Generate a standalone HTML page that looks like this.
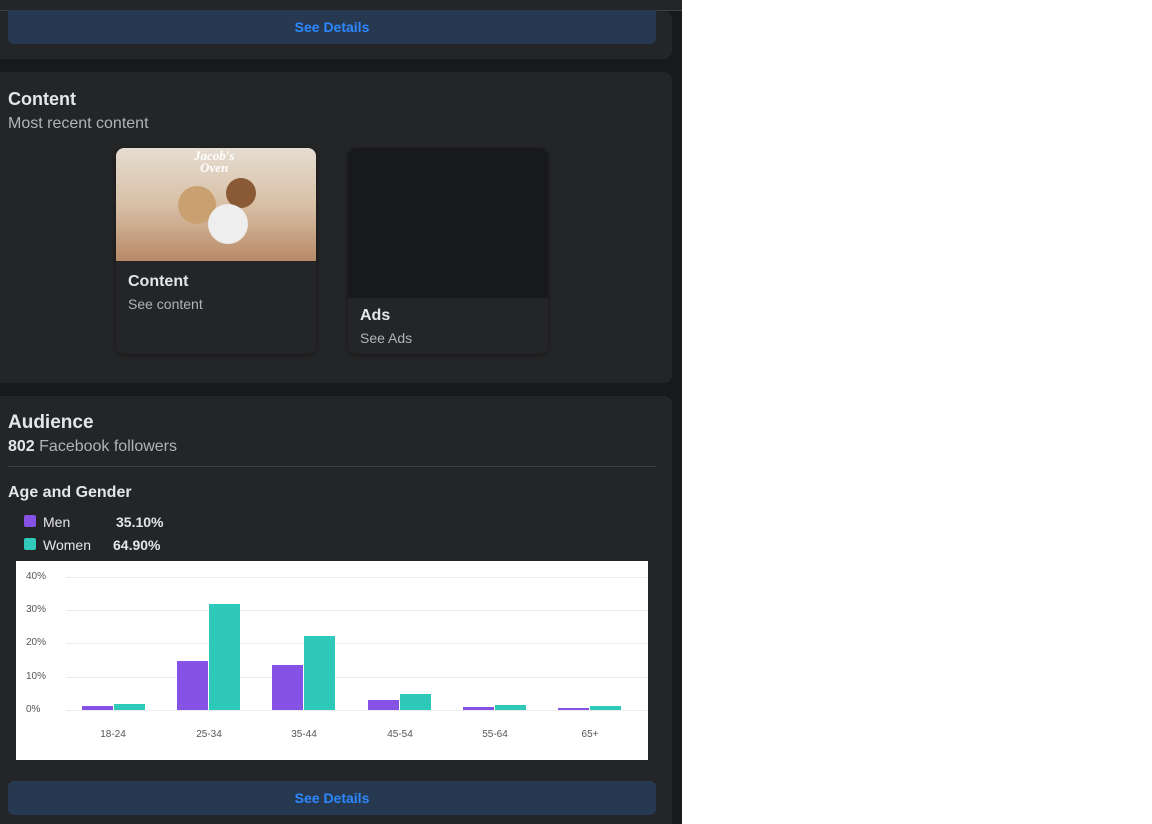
<!DOCTYPE html>
<html style="width:1152px;height:824px;overflow:hidden"><head><style>
body{margin:0;width:1152px;height:824px;background:#fff;font-family:"Liberation Sans",sans-serif;position:relative;overflow:hidden}
.l{position:absolute;left:0;top:0;width:682px;height:824px;background:#18191a}
.c{position:absolute;left:0;width:672px;background:#242526;border-radius:0 8px 8px 0}
.btn{position:absolute;left:8px;width:648px;height:34px;background:#263951;border-radius:6px;color:#2d88ff;font-size:14px;font-weight:bold;text-align:center;line-height:34px}
.t{position:absolute;color:#e4e6eb}
.s{color:#b0b3b8}
.bar{position:absolute;width:31px}
.m{background:#8651e5}.w{background:#2ec9b8}
.g{position:absolute;left:50px;width:582px;height:1px;background:#ebebeb}
.yl{position:absolute;left:10px;font-size:10px;color:#555}
.xl{position:absolute;top:168px;font-size:10px;color:#555;width:60px;text-align:center}
</style></head><body>
<div class="l"></div>
<div style="position:absolute;left:0;top:0;width:682px;height:10px;background:#242526;border-bottom:1px solid #3e4042"></div>
<div class="c" style="top:11px;height:48px"></div>
<div class="btn" style="top:10px;border-radius:0 0 6px 6px">See Details</div>
<div class="c" style="top:72px;height:311px"></div>
<div class="t" style="left:8px;top:89px;font-size:18px;font-weight:bold">Content</div>
<div class="t s" style="left:8px;top:115px;font-size:16px">Most recent content</div>
<div style="position:absolute;left:116px;top:148px;width:200px;height:206px;background:#242526;border-radius:8px;box-shadow:0 1px 4px rgba(0,0,0,.4);overflow:hidden">
<div style="height:113px;background:linear-gradient(180deg,#e6ddd2 0%,#d8c0a6 50%,#b88a68 100%);position:relative">
<div style="position:absolute;left:78px;top:2px;font:bold italic 13px 'Liberation Serif',serif;color:#fff;text-align:center;line-height:12px">Jacob's<br>Oven</div>
<div style="position:absolute;left:62px;top:38px;width:38px;height:38px;border-radius:50%;background:#c9a070"></div>
<div style="position:absolute;left:110px;top:30px;width:30px;height:30px;border-radius:50%;background:#8a5a36"></div>
<div style="position:absolute;left:92px;top:56px;width:40px;height:40px;border-radius:50%;background:#eee"></div>
</div>
<div class="t" style="left:12px;top:125px;font-size:16px;font-weight:bold">Content</div>
<div class="t s" style="left:12px;top:148px;font-size:14px">See content</div>
</div>
<div style="position:absolute;left:348px;top:148px;width:200px;height:206px;background:#242526;border-radius:8px;box-shadow:0 1px 4px rgba(0,0,0,.4);overflow:hidden">
<div style="height:150px;background:#18191a"></div>
<div class="t" style="left:12px;top:159px;font-size:16px;font-weight:bold">Ads</div>
<div class="t s" style="left:12px;top:182px;font-size:14px">See Ads</div>
</div>
<div class="c" style="top:396px;height:428px;border-radius:0 8px 0 0"></div>
<div class="t" style="left:8px;top:412px;font-size:19px;font-weight:bold">Audience</div>
<div class="t s" style="left:8px;top:438px;font-size:16px"><b style="color:#e4e6eb">802</b> Facebook followers</div>
<div style="position:absolute;left:8px;top:466px;width:648px;height:1px;background:#3e4042"></div>
<div class="t" style="left:8px;top:484px;font-size:16px;font-weight:bold">Age and Gender</div>
<div style="position:absolute;left:24px;top:515px;width:12px;height:12px;background:#8651e5;border-radius:2px"></div>
<div class="t" style="left:43px;top:514px;font-size:14px">Men</div>
<div class="t" style="left:116px;top:514px;font-size:14px;font-weight:bold">35.10%</div>
<div style="position:absolute;left:24px;top:538px;width:12px;height:12px;background:#2ec9b8;border-radius:2px"></div>
<div class="t" style="left:43px;top:537px;font-size:14px">Women</div>
<div class="t" style="left:113px;top:537px;font-size:14px;font-weight:bold">64.90%</div>
<div style="position:absolute;left:16px;top:561px;width:632px;height:199px;background:#fff">
<div class="g" style="top:16px"></div><div class="g" style="top:49px"></div><div class="g" style="top:82px"></div><div class="g" style="top:116px"></div><div class="g" style="top:149px"></div>
<div class="yl" style="top:10px">40%</div><div class="yl" style="top:43px">30%</div><div class="yl" style="top:76px">20%</div><div class="yl" style="top:110px">10%</div><div class="yl" style="top:143px">0%</div>
<div class="bar m" style="left:66px;top:145px;height:4px"></div><div class="bar w" style="left:98px;top:143px;height:6px"></div>
<div class="bar m" style="left:161px;top:100px;height:49px"></div><div class="bar w" style="left:193px;top:43px;height:106px"></div>
<div class="bar m" style="left:256px;top:104px;height:45px"></div><div class="bar w" style="left:288px;top:75px;height:74px"></div>
<div class="bar m" style="left:352px;top:139px;height:10px"></div><div class="bar w" style="left:384px;top:133px;height:16px"></div>
<div class="bar m" style="left:447px;top:146px;height:3px"></div><div class="bar w" style="left:479px;top:144px;height:5px"></div>
<div class="bar m" style="left:542px;top:147px;height:2px"></div><div class="bar w" style="left:574px;top:145px;height:4px"></div>
<div class="xl" style="left:67px">18-24</div><div class="xl" style="left:163px">25-34</div><div class="xl" style="left:258px">35-44</div><div class="xl" style="left:354px">45-54</div><div class="xl" style="left:449px">55-64</div><div class="xl" style="left:544px">65+</div>
</div>
<div class="btn" style="top:781px">See Details</div>
</body></html>
